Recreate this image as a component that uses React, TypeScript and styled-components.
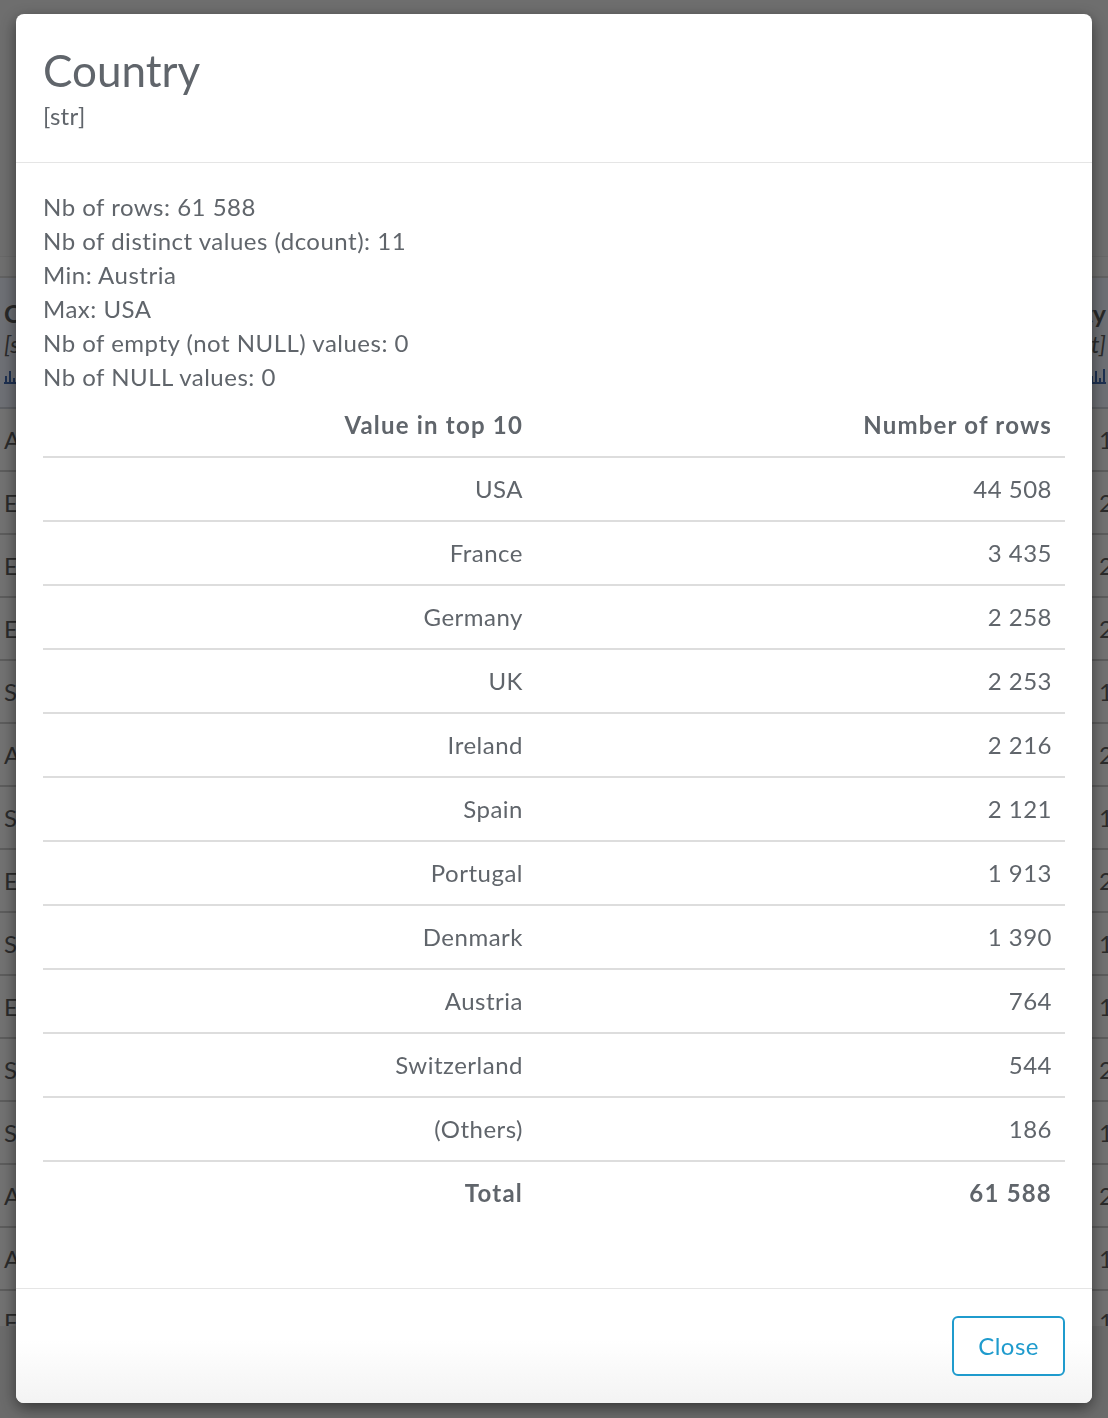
import React from "react";
import styled, { createGlobalStyle } from "styled-components";

const GlobalStyle = createGlobalStyle`
  html, body { margin: 0; padding: 0; }
  body {
    width: 1108px;
    height: 1418px;
    overflow: hidden;
    background: #d6d6d6;
    font-family: Lato, "Open Sans", "Noto Sans", sans-serif;
  }
`;

/* ---------- page behind the dialog ---------- */

const Page = styled.div`
  width: 1108px;
  height: 1418px;
  overflow: hidden;
  background: #d2d2d2;
  color: #555;
  font-family: Lato, "Open Sans", sans-serif;
`;

const TopBar = styled.div`
  height: 256px;
  background: #d8d8d8;
  border-bottom: 1px solid #cdcdcd;
`;

const SubBar = styled.div`
  height: 19px;
  background: #dadada;
  border-bottom: 2px solid #c0c0c0;
`;

const GridHeader = styled.div`
  display: grid;
  grid-template-columns: 1fr 200px;
  height: 129px;
  background: #d8dce6;
  border-bottom: 2px solid #b8bcc4;
`;

const HeadCell = styled.div<{ $right?: boolean }>`
  display: flex;
  flex-direction: column;
  align-items: ${(p) => (p.$right ? "flex-end" : "flex-start")};
  padding: 20px ${(p) => (p.$right ? "2px" : "0")} 0 ${(p) => (p.$right ? "0" : "4px")};
  overflow: hidden;
  white-space: nowrap;
`;

const HeadName = styled.div`
  font-size: 25px;
  font-weight: 700;
  line-height: 30px;
  color: #505050;
`;

const HeadType = styled.div`
  font-size: 24px;
  font-style: italic;
  line-height: 32px;
  color: #555;
`;

const ChartLink = styled.div`
  margin-top: 6px;
  border-bottom: 2px solid #3a5f9f;
  line-height: 0;
`;

const GridBody = styled.div`
  height: 917px;
  overflow: hidden;
  background: #e0e0e0;
`;

const GridRow = styled.div`
  display: grid;
  grid-template-columns: 1fr 200px;
  height: 61px;
  align-items: center;
  border-bottom: 2px solid #b6b6b6;
  font-size: 24px;
  color: #555;
`;

const RowCell = styled.div<{ $right?: boolean }>`
  padding-left: ${(p) => (p.$right ? "191px" : "4px")};
  white-space: nowrap;
  overflow: hidden;
`;

/* ---------- dialog ---------- */

const Overlay = styled.div`
  position: fixed;
  inset: 0;
  background: rgba(0, 0, 0, 0.49);
  display: flex;
  align-items: flex-start;
  padding: 14px 16px;
`;

const Dialog = styled.div`
  width: 1076px;
  background: #fff;
  border-radius: 8px;
  box-shadow: 0 5px 16px rgba(0, 0, 0, 0.5);
  overflow: hidden;
  color: #60656b;
  font-family: Lato, "Open Sans", "Noto Sans", sans-serif;
`;

const Header = styled.div`
  padding: 27px 27px 29px;
  border-bottom: 1px solid #e5e5e5;
`;

const Title = styled.h2`
  margin: 0;
  font-size: 44px;
  font-weight: 400;
  line-height: 58px;
  color: #60656b;
`;

const Subtitle = styled.div`
  font-size: 24px;
  line-height: 34px;
  letter-spacing: 0.3px;
`;

const Body = styled.div`
  padding: 27px 27px 27px;
`;

const Stat = styled.div`
  font-size: 24px;
  line-height: 34px;
  letter-spacing: 0.5px;
`;

const Table = styled.table`
  width: 100%;
  border-collapse: collapse;
  margin-bottom: 37px;
  font-size: 24px;
  line-height: 34px;
  letter-spacing: 0.5px;
`;

const Th = styled.th<{ $first?: boolean }>`
  width: ${(p) => (p.$first ? "467px" : "auto")};
  text-align: right;
  font-weight: 700;
  letter-spacing: 1.2px;
  padding: 14px 13px;
  border-bottom: 2px solid #dddddd;
`;

const Td = styled.td<{ $bold?: boolean; $last?: boolean }>`
  text-align: right;
  font-weight: ${(p) => (p.$bold ? 700 : 400)};
  letter-spacing: ${(p) => (p.$bold ? "1.2px" : "0.5px")};
  padding: 14px 13px;
  border-bottom: ${(p) => (p.$last ? "none" : "2px solid #dddddd")};
`;

const Footer = styled.div`
  display: flex;
  justify-content: flex-end;
  padding: 27px 27px 27px;
  border-top: 1px solid #e5e5e5;
  background: linear-gradient(#ffffff 45%, #f3f3f3);
`;

const CloseButton = styled.button`
  height: 60px;
  padding: 0 24px;
  background: #fff;
  border: 2px solid #1f9bcd;
  border-radius: 6px;
  color: #1f9bcd;
  font-family: Lato, "Open Sans", sans-serif;
  font-size: 24px;
  line-height: 34px;
  letter-spacing: 0.5px;
  cursor: pointer;
`;

const BarsIcon = ({ w }: { w: number }) => (
  <svg width={w} height="16" viewBox={`0 0 ${w} 16`} fill="#3a5f9f">
    {Array.from({ length: Math.floor(w / 4) }).map((_, i) => {
      const hs = [6, 11, 4, 13, 8, 12];
      const h = hs[i % hs.length];
      return <rect key={i} x={i * 4 + 1} y={16 - h} width="2" height={h} />;
    })}
  </svg>
);

const bgRows: [string, string][] = [
  ["Austria", "1 034"],
  ["Estonia", "2 345"],
  ["Estonia", "2 210"],
  ["Estonia", "2 877"],
  ["Spain", "1 640"],
  ["Austria", "2 112"],
  ["Spain", "1 503"],
  ["Estonia", "2 778"],
  ["Spain", "1 921"],
  ["Estonia", "1 456"],
  ["Spain", "2 690"],
  ["Spain", "1 214"],
  ["Austria", "2 305"],
  ["Austria", "1 118"],
  ["France", "1 442"],
];

const topValues: [string, string][] = [
  ["USA", "44 508"],
  ["France", "3 435"],
  ["Germany", "2 258"],
  ["UK", "2 253"],
  ["Ireland", "2 216"],
  ["Spain", "2 121"],
  ["Portugal", "1 913"],
  ["Denmark", "1 390"],
  ["Austria", "764"],
  ["Switzerland", "544"],
  ["(Others)", "186"],
];

export default function App() {
  return (
    <>
      <GlobalStyle />
      <Page aria-hidden="true">
        <TopBar />
        <SubBar />
        <GridHeader>
          <HeadCell>
            <HeadName>Country</HeadName>
            <HeadType>[str]</HeadType>
            <ChartLink>
              <BarsIcon w={16} />
            </ChartLink>
          </HeadCell>
          <HeadCell $right>
            <HeadName>Quantity</HeadName>
            <HeadType>[int]</HeadType>
            <ChartLink>
              <BarsIcon w={16} />
            </ChartLink>
          </HeadCell>
        </GridHeader>
        <GridBody>
          {bgRows.map(([a, b], i) => (
            <GridRow key={i}>
              <RowCell>{a}</RowCell>
              <RowCell $right>{b}</RowCell>
            </GridRow>
          ))}
        </GridBody>
      </Page>

      <Overlay>
        <Dialog>
          <Header>
            <Title>Country</Title>
            <Subtitle>[str]</Subtitle>
          </Header>
          <Body>
            <Stat>Nb of rows: 61 588</Stat>
            <Stat>Nb of distinct values (dcount): 11</Stat>
            <Stat>Min: Austria</Stat>
            <Stat>Max: USA</Stat>
            <Stat>Nb of empty (not NULL) values: 0</Stat>
            <Stat>Nb of NULL values: 0</Stat>
            <Table>
              <thead>
                <tr>
                  <Th $first>Value in top 10</Th>
                  <Th>Number of rows</Th>
                </tr>
              </thead>
              <tbody>
                {topValues.map(([v, n]) => (
                  <tr key={v}>
                    <Td>{v}</Td>
                    <Td>{n}</Td>
                  </tr>
                ))}
                <tr>
                  <Td $bold $last>
                    Total
                  </Td>
                  <Td $bold $last>
                    61 588
                  </Td>
                </tr>
              </tbody>
            </Table>
          </Body>
          <Footer>
            <CloseButton>Close</CloseButton>
          </Footer>
        </Dialog>
      </Overlay>
    </>
  );
}
